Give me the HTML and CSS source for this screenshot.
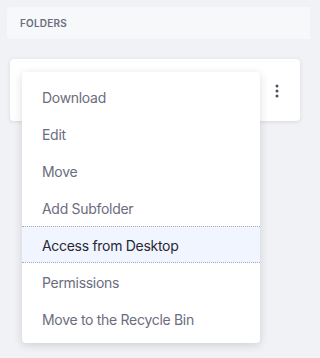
FILE: index.html
```html
<!DOCTYPE html>
<html>
<head>
<meta charset="utf-8">
<link rel="stylesheet" href="styles.css">
</head>
<body>
<div class="page">
  <div class="section-header">FOLDERS</div>
  <div class="card">
    <div class="card-body"></div>
    <button class="kebab" aria-label="Actions">
      <svg width="4" height="14" viewBox="0 0 4 14"><circle cx="2" cy="2" r="1.5"/><circle cx="2" cy="7" r="1.5"/><circle cx="2" cy="12" r="1.5"/></svg>
    </button>
    <ul class="menu">
      <li class="item">Download</li>
      <li class="item">Edit</li>
      <li class="item">Move</li>
      <li class="item">Add Subfolder</li>
      <li class="item active">Access from Desktop</li>
      <li class="item">Permissions</li>
      <li class="item">Move to the Recycle Bin</li>
    </ul>
  </div>
</div>
</body>
</html>
```
FILE: styles.css
```css
* { box-sizing: border-box; }
html, body { margin: 0; padding: 0; }
body {
  background: #f1f2f5;
  font-family: Inter, "Noto Sans", sans-serif;
  min-height: 358px;
}
.page {
  padding: 7px 0 0 7px;
  width: 310px;
}
.section-header {
  height: 32px;
  background: #f7f8f9;
  border-radius: 4px 0 0 4px;
  padding-left: 13px;
  display: flex;
  align-items: center;
  font-size: 10px;
  font-weight: 600;
  color: #6b6c7e;
  letter-spacing: 0.2px;
}
.card {
  position: relative;
  margin: 20px 10px 0 3px;
  height: 62px;
  background: #fff;
  border-radius: 4px;
  box-shadow: 0 1px 4px rgba(39, 40, 51, 0.12);
  display: flex;
  align-items: center;
  justify-content: flex-end;
  padding-right: 21px;
}
.card-body { flex: 1; }
.kebab {
  border: 0;
  background: transparent;
  padding: 0;
  display: flex;
  fill: #4f505e;
  margin-top: 1px;
}
.menu {
  position: absolute;
  left: 12px;
  top: 13px;
  width: 238px;
  margin: 0;
  padding: 6px 0;
  list-style: none;
  background: #fff;
  border-radius: 4px;
  box-shadow: 0 2px 8px rgba(39, 40, 51, 0.16);
}
.item {
  height: 37px;
  display: flex;
  align-items: center;
  padding-left: 20px;
  padding-top: 1px;
  font-size: 14px;
  letter-spacing: -0.3px;
  color: #6b6c7e;
}
.item.active {
  background: #f0f5ff;
  color: #272833;
  border-top: 1px dotted #a7a9bc;
  border-bottom: 1px dotted #a7a9bc;
}
```
